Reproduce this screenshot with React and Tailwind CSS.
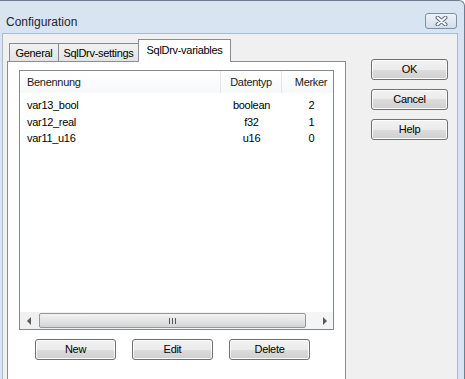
import React from 'react';

const variables = [
  { name: 'var13_bool', type: 'boolean', flag: 2 },
  { name: 'var12_real', type: 'f32', flag: 1 },
  { name: 'var11_u16', type: 'u16', flag: 0 },
];

function WinButton({ children, className = '' }) {
  return (
    <button
      className={`h-[21px] flex items-center justify-center rounded-[3px] border border-[#707070] bg-[linear-gradient(#f2f2f2_0%,#ebebeb_50%,#dddddd_50%,#cfcfcf_100%)] text-[11px] tracking-[-0.3px] text-black shadow-[inset_0_0_0_1px_#fcfcfc] ${className}`}
    >
      {children}
    </button>
  );
}

function Tab({ label, active, className = '' }) {
  if (active) {
    return (
      <div className={`h-[23px] -mb-[1px] flex items-start justify-center pt-[3px] bg-white border border-b-0 border-[#898c95] text-[11px] tracking-[-0.3px] leading-[14px] z-10 ${className}`}>
        {label}
      </div>
    );
  }
  return (
    <div className={`h-[18px] flex items-center justify-center bg-[linear-gradient(#f2f2f2,#e3e3e3)] border border-b-0 border-r-0 border-[#898c95] text-[11px] tracking-[-0.3px] leading-[14px] ${className}`}>
      {label}
    </div>
  );
}

function ArrowLeft() {
  return <div className="w-0 h-0 border-y-[4px] border-y-transparent border-r-[4px] border-r-[#5a5a5a]" />;
}

function ArrowRight() {
  return <div className="w-0 h-0 border-y-[4px] border-y-transparent border-l-[4px] border-l-[#5a5a5a]" />;
}

export default function App() {
  return (
    <div className="w-[465px] h-[379px] overflow-hidden bg-white font-['Liberation_Sans',Arial,sans-serif]">
      <div className="w-[465px] h-[379px] flex flex-col bg-[#d9e4f2] border-t border-r border-[#6e7d91] rounded-tr-[6px]">
        {/* Title bar */}
        <div className="h-[32px] flex items-start justify-between pl-[6px] pr-[7px]">
          <span className="pt-[13px] text-[12px] leading-[16px] text-[#1e2530]">Configuration</span>
          <div className="mt-[12px] w-[32px] h-[16px] flex items-center justify-center rounded-[3px] border border-[#7f8fa6] bg-[linear-gradient(#edf2f9,#d3ddea)]">
            <svg width="13" height="10" viewBox="0 0 13 10">
              <path d="M2.5 1.5 L10.5 8.5 M10.5 1.5 L2.5 8.5" stroke="#5c6a7d" strokeWidth="4" strokeLinecap="round" />
              <path d="M2.5 1.5 L10.5 8.5 M10.5 1.5 L2.5 8.5" stroke="#ffffff" strokeWidth="2" strokeLinecap="round" />
            </svg>
          </div>
        </div>

        {/* Client area */}
        <div className="flex-1 flex ml-[2px] mr-[6px] border border-b-0 border-[#a9bbd0] bg-[#f0f0f0]">
          {/* Tab control */}
          <div className="pl-[4px] pt-[5px] flex flex-col">
            <div className="flex items-end pl-[2px]">
              <Tab label="General" className="w-[49px]" />
              <Tab label="SqlDrv-settings" className="w-[80px]" />
              <Tab label="SqlDrv-variables" active className="w-[93px]" />
            </div>
            <div className="w-[339px] flex-1 bg-white border border-b-0 border-[#898c95] pt-[8px] px-[11px]">
              {/* List view */}
              <div className="h-[260px] border border-[#828790] flex flex-col overflow-hidden">
                <div className="h-[22px] flex shrink-0 bg-[linear-gradient(#ffffff,#f7f8fa)] text-[11px] tracking-[-0.3px] text-[#1a1a1a]">
                  <div className="w-[201px] shrink-0 pl-[7px] flex items-center border-r border-[#e5e5e5]">Benennung</div>
                  <div className="w-[61px] shrink-0 flex items-center justify-center border-r border-[#e5e5e5]">Datentyp</div>
                  <div className="w-[59px] shrink-0 flex items-center justify-center border-r border-[#e5e5e5]">Merker</div>
                </div>
                <div className="pt-[4px] flex flex-col text-[11px] tracking-[-0.3px] text-black">
                  {variables.map((v) => (
                    <div key={v.name} className="h-[16.5px] flex items-center">
                      <div className="w-[201px] shrink-0 pl-[7px]">{v.name}</div>
                      <div className="w-[61px] shrink-0 text-center">{v.type}</div>
                      <div className="w-[59px] shrink-0 text-center">{v.flag}</div>
                    </div>
                  ))}
                </div>

                {/* Horizontal scrollbar */}
                <div className="mt-auto h-[17px] shrink-0 flex items-center bg-[linear-gradient(90deg,#f0f0f0,#f5f5f5)]">
                  <div className="w-[17px] h-[17px] flex items-center justify-center">
                    <ArrowLeft />
                  </div>
                  <div className="ml-[2px] w-[267px] h-[15px] rounded-[2px] border border-[#979797] bg-[linear-gradient(#f3f3f3,#e4e4e4_50%,#d4d4d4)] flex items-center justify-center gap-[1px]">
                    <div className="w-[1px] h-[6px] bg-[#555]" />
                    <div className="w-[1px] h-[6px] bg-[#555] ml-[1px]" />
                    <div className="w-[1px] h-[6px] bg-[#555] ml-[1px]" />
                  </div>
                  <div className="flex-1" />
                  <div className="w-[17px] h-[17px] flex items-center justify-center">
                    <ArrowRight />
                  </div>
                </div>
              </div>

              <div className="mt-[9px] pl-[16px] flex gap-[16px]">
                <WinButton className="w-[81px]">New</WinButton>
                <WinButton className="w-[81px]">Edit</WinButton>
                <WinButton className="w-[81px]">Delete</WinButton>
              </div>
            </div>
          </div>

          {/* Dialog buttons */}
          <div className="ml-[25px] mt-[25px] flex flex-col gap-[9px]">
            <WinButton className="w-[77px]">OK</WinButton>
            <WinButton className="w-[77px]">Cancel</WinButton>
            <WinButton className="w-[77px]">Help</WinButton>
          </div>
        </div>
      </div>
    </div>
  );
}
